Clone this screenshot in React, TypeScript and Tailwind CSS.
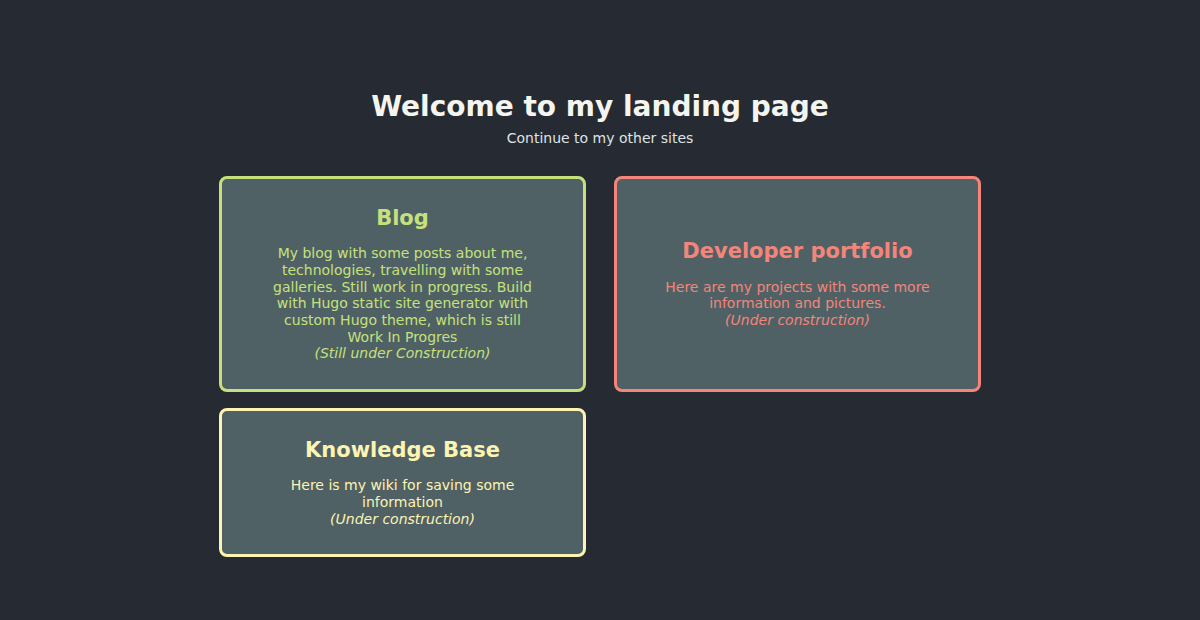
import React from 'react';

type Site = {
    title: string;
    text: string;
    note: string;
    color: string;
};

const Card: React.FC<{ site: Site }> = ({ site }) => {
    return (
        <a
            href="#"
            className={`flex flex-col justify-center items-center text-center bg-[#4f6165] border-[3px] rounded-lg px-[45px] pt-[27px] pb-[27px] ${site.color}`}
        >
            <h2 className="text-[21px] font-bold leading-[1.164]">{site.title}</h2>
            <p className="mt-[15px] text-[14px] leading-[1.19]">
                {site.text}
                <br />
                <em>{site.note}</em>
            </p>
        </a>
    );
};

const blog: Site = {
    title: 'Blog',
    text: 'My blog with some posts about me, technologies, travelling with some galleries. Still work in progress. Build with Hugo static site generator with custom Hugo theme, which is still Work In Progres',
    note: '(Still under Construction)',
    color: 'border-[#c6e17b] text-[#c6e17b]',
};

const portfolio: Site = {
    title: 'Developer portfolio',
    text: 'Here are my projects with some more information and pictures.',
    note: '(Under construction)',
    color: 'border-[#f4857a] text-[#f4857a]',
};

const wiki: Site = {
    title: 'Knowledge Base',
    text: 'Here is my wiki for saving some information',
    note: '(Under construction)',
    color: 'border-[#fdf4b2] text-[#fdf4b2]',
};

export default function App() {
    return (
        <div
            className="min-h-screen bg-[#262b33] flex flex-col items-center pt-[91px] pb-10"
            style={{ fontFamily: '"DejaVu Sans", Verdana, sans-serif' }}
        >
            <h1 className="text-[28px] font-bold leading-[1.164] text-[#f5f5f0]">Welcome to my landing page</h1>
            <p className="mt-[6px] text-[14px] leading-[1.164] text-[#dfe3e6]">Continue to my other sites</p>

            <div className="mt-[30px] grid grid-cols-[367px_367px] gap-x-[28px] gap-y-4">
                <Card site={blog} />
                <Card site={portfolio} />
                <Card site={wiki} />
            </div>
        </div>
    );
}
